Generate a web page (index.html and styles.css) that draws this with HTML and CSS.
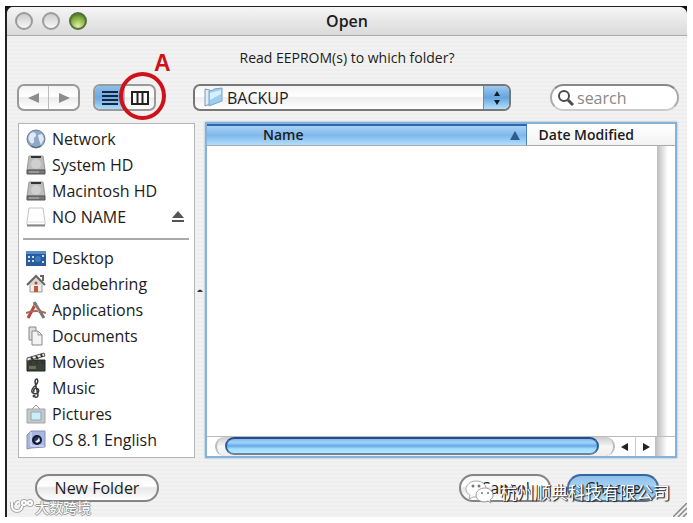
FILE: index.html
```html
<!DOCTYPE html>
<html lang="en">
<head>
<meta charset="utf-8">
<title>Open</title>
<link rel="stylesheet" href="styles.css">
</head>
<body>
<div class="frame">
<main class="window">
  <header class="titlebar">
    <div class="lights">
      <button class="light" aria-label="Close"></button>
      <button class="light" aria-label="Minimize"></button>
      <button class="light light-green" aria-label="Zoom"></button>
    </div>
    <h1>Open</h1>
  </header>
  <p class="prompt">Read EEPROM(s) to which folder?</p>

  <div class="toolbar">
    <div class="segments">
      <button aria-label="Back"><svg width="14" height="12" viewBox="0 0 14 12"><path d="M12 1v10L1 6z" fill="#8c8c8c"/></svg></button>
      <button aria-label="Forward"><svg width="14" height="12" viewBox="0 0 14 12"><path d="M2 1v10l11-5z" fill="#8c8c8c"/></svg></button>
    </div>
    <div class="segments views">
      <button class="active" aria-label="List view"><svg width="16" height="14" viewBox="0 0 16 14"><path d="M0 1h16M0 5h16M0 9h16M0 13h16" stroke="#17253b" stroke-width="2"/></svg></button>
      <button aria-label="Column view"><svg width="18" height="14" viewBox="0 0 18 14"><path d="M1 1h16v12H1zM6.5 1v12M11.5 1v12" fill="#fff" stroke="#222" stroke-width="2"/></svg></button>
      <div class="callout"><span>A</span></div>
    </div>
    <div class="popup">
      <svg class="folder" width="20" height="20" viewBox="0 0 20 20"><path d="M2 2l5 1v14l-5 2z" fill="#dceefa" stroke="#8796a5"/><path d="M6 4l4-1 1-1 8-1v13L6 19z" fill="#9fcdf0" stroke="#7aa6ca"/><path d="M7 6l11-3v4L7 13z" fill="#d9efff"/></svg>
      <select aria-label="Folder"><option>BACKUP</option></select>
      <span class="cap"><svg width="8" height="14" viewBox="0 0 8 14"><path d="M4 0l3 5H1zM4 14l3-5H1z" fill="#101c30"/></svg></span>
    </div>
    <label class="search">
      <svg width="17" height="17" viewBox="0 0 17 17"><circle cx="7" cy="7" r="5" fill="none" stroke="#4c4c4c" stroke-width="2"/><path d="M11 11l5 5" stroke="#4c4c4c" stroke-width="3"/></svg>
      <input type="text" placeholder="search" aria-label="search">
    </label>
  </div>

  <div class="browser">
    <nav class="sidebar">
      <ul>
        <li><svg class="icon" viewBox="0 0 20 20"><circle cx="10" cy="10" r="9" fill="#8fa8c6" stroke="#6b7d94"/><path d="M4 5c3-3 6-2 6 1s-3 2-2 5-2 5-4 2-2-5 0-8zM12 6l4-1 2 5-3 6-2-5z" fill="#dfeaf4"/><path d="M5 17q5 3 10 0" stroke="#53657d" fill="none"/></svg>Network</li>
        <li><svg class="icon" viewBox="0 0 20 20"><path d="M3 1h14l2 14H1z" fill="#bcbcbc" stroke="#999"/><path d="M1 15h18v4H1z" fill="#777" stroke="#555"/><path d="M5 2h10" stroke="#333" stroke-width="2"/><circle cx="10" cy="9" r="5" fill="#cfcfcf"/><path d="M3 17h10" stroke="#bbb"/></svg>System HD</li>
        <li><svg class="icon" viewBox="0 0 20 20"><path d="M3 1h14l2 14H1z" fill="#bcbcbc" stroke="#999"/><path d="M1 15h18v4H1z" fill="#777" stroke="#555"/><path d="M5 2h10" stroke="#333" stroke-width="2"/><circle cx="10" cy="9" r="5" fill="#cfcfcf"/><path d="M3 17h10" stroke="#bbb"/></svg>Macintosh HD</li>
        <li><svg class="icon" viewBox="0 0 20 20"><path d="M3 1h14l2 14v3H1v-3z" fill="#fff" stroke="#c4c4c4"/><path d="M1 18.500h18" stroke="#858585" stroke-width="2"/><path d="M2 15h16" stroke="#ddd"/></svg>NO NAME
          <button class="eject" aria-label="Eject NO NAME"><svg width="14" height="12" viewBox="0 0 14 12"><path d="M7 0l6 7H1zM1 9h12v2H1z" fill="#555"/></svg></button></li>
      </ul>
      <hr>
      <ul>
        <li><svg class="icon" viewBox="0 0 20 20"><path d="M0 3h20v15H0z" fill="#285c9f"/><path d="M0 3h20v3H0z" fill="#5b8dc8"/><path d="M2 8h2v2H2zM2 12h2v2H2zM6 8h2v2H6zM6 12h2v2H6zM16 7h2v2h-2zM16 13h2v2h-2z" fill="#c6e0f6"/><circle cx="12" cy="11" r="3" fill="#3f7ac0"/></svg>Desktop</li>
        <li><svg class="icon" viewBox="0 0 20 20"><path d="M4 10h12v8H4z" fill="#eee" stroke="#999"/><path d="M1 11l9-9 9 9" fill="#d8d8d8" stroke="#6d6259" stroke-width="2"/><path d="M14 2h3v5" fill="none" stroke="#666" stroke-width="2"/><path d="M8 12h4v6H8z" fill="#c75733"/><circle cx="10" cy="9" r="1.500" fill="#a34f36"/></svg>dadebehring</li>
        <li><svg class="icon" viewBox="0 0 20 20"><path d="M2 18L10 3" stroke="#ba473b" stroke-width="3"/><path d="M8 2l10 16" stroke="#777" stroke-width="3"/><path d="M0 13q10-4 20 0" stroke="#a5685d" stroke-width="2" fill="none"/><path d="M8 5l5 7" stroke="#e2a49a"/></svg>Applications</li>
        <li><svg class="icon" viewBox="0 0 20 20"><path d="M3 1h7v13H3z" fill="#ddd" stroke="#888"/><path d="M6 5h6l4 4v10H6z" fill="#f3f3f3" stroke="#8a8a8a"/><path d="M12 5v4h4" fill="none" stroke="#999"/></svg>Documents</li>
        <li><svg class="icon" viewBox="0 0 20 20"><path d="M1 8h18v11H1z" fill="#3b4136" stroke="#222"/><path d="M1 6L18 1l1 3L1 9z" fill="#e8e8e2" stroke="#555"/><path d="M5 5l2 3M10 4l2 3M15 2l1 3M3 9l3 3M9 9l3 3M15 9l3 3" stroke="#333" stroke-width="2"/><path d="M3 14h7v3H3z" fill="#687159"/></svg>Movies</li>
        <li><svg class="icon" viewBox="0 0 20 20"><path d="M9 19q3 1 3-2L9 4q0-3 2-3 2 2-1 6-5 4-4 7 2 3 6 1 2-4-2-5-3 1-2 4" fill="none" stroke="#3d3d3d" stroke-width="1.500"/><circle cx="8" cy="18" r="1.500" fill="#444"/></svg>Music</li>
        <li><svg class="icon" viewBox="0 0 20 20"><path d="M6 5l4-4 4 4" fill="none" stroke="#999"/><path d="M1 5h18v14H1z" fill="#c7c7c7" stroke="#a5a5a5"/><path d="M5 8h10v8H5z" fill="#cceefa" stroke="#8caab9"/></svg>Pictures</li>
        <li><svg class="icon" viewBox="0 0 20 20"><path d="M5 1h14v16L5 18l-4 1V5z" fill="#a9b7df" stroke="#8391bc"/><path d="M5 2v14h13" fill="none" stroke="#e5eaf8"/><circle cx="11" cy="10" r="4" fill="#29345a" stroke="#111a38" stroke-width="2"/><path d="M9 11q3 0 4-4l1 4-3 2z" fill="#eff2fc"/></svg>OS 8.1 English</li>
      </ul>
    </nav>
    <div class="divider"><svg width="8" height="5" viewBox="0 0 8 5"><path d="M1 4q3-5 6 0z" fill="#333"/></svg></div>
    <section class="files">
      <table>
        <thead><tr><th class="name">Name<svg width="10" height="9" viewBox="0 0 10 9"><path d="M5 0l5 9H0z" fill="#315b8d"/></svg></th><th class="date">Date Modified</th></tr></thead>
      </table>
      <div class="pane"><div class="track-v"></div></div>
      <div class="track-h">
        <div class="groove"><div class="thumb"></div></div>
        <button aria-label="Scroll left"><svg width="8" height="8" viewBox="0 0 8 8"><path d="M7 0v8L0 4z" fill="#222"/></svg></button>
        <button aria-label="Scroll right"><svg width="8" height="8" viewBox="0 0 8 8"><path d="M1 0v8l7-4z" fill="#222"/></svg></button>
        <div class="corner"></div>
      </div>
    </section>
  </div>

  <footer>
    <button class="pill new">New Folder</button>
    <button class="pill">Cancel</button>
    <button class="pill default">Choose</button>
  </footer>
  <svg class="grip" width="14" height="14" viewBox="0 0 14 14"><path d="M0 14L14 0M5 14l9-9M10 14l4-4" stroke="#888" stroke-width="1.500"/></svg>
  <div class="mark-left"><svg width="25" height="16" viewBox="0 0 25 16"><g fill="none" stroke="#aaa" stroke-width="4"><path d="M3 3v4a5 5 0 0 0 10 0M7 6q0-3 3-3"/><circle cx="15" cy="4" r="2"/><circle cx="21" cy="4" r="2"/></g><g fill="none" stroke="#fff" stroke-width="2"><path d="M3 3v4a5 5 0 0 0 10 0M7 6q0-3 3-3"/><circle cx="15" cy="4" r="2"/><circle cx="21" cy="4" r="2"/></g></svg><span lang="zh">大数跨境</span></div>
  <div class="mark-right"><svg width="29" height="24" viewBox="0 0 29 24"><path d="M11 1C5 1 1 5 1 9c0 3 2 5 4 6l-1 4 4-2h3c6 0 10-3 10-8s-4-8-10-8z" fill="#fff" stroke="#aaa"/><path d="M20 8c-5 0-9 3-9 7s4 7 9 7l3-1 3 2-1-3c2-1 3-3 3-5 0-4-4-7-8-7z" fill="#fff" stroke="#999"/><g fill="#777"><circle cx="8" cy="6" r="1.500"/><circle cx="14" cy="6" r="1.500"/><circle cx="17" cy="13" r="1"/><circle cx="23" cy="13" r="1"/></g></svg><span lang="zh">杭州顺典科技有限公司</span></div>
</main>
</div>
</body>
</html>
```

FILE: styles.css
```css
* { box-sizing: border-box; }
body {
  margin: 0;
  padding: 6px 6px 6px 5px;
  background: #fff;
  color: #1c1c1c;
  font: 500 16px/20px "Open Sans", "Noto Sans", sans-serif;
}
button { padding: 0; border: 0; background: none; font: inherit; color: inherit; }
svg { display: block; flex: none; }
ul { margin: 0; padding: 0; list-style: none; }

.frame { background: linear-gradient(#111 20px, transparent 20px); }
.window {
  position: relative;
  overflow: hidden;
  border-top: 1px solid #222;
  border-left: 2px solid #222;
  border-radius: 8px 8px 0 0;
  background: repeating-linear-gradient(#f2f2f2 0 2px, #eee 2px 4px);
}
.titlebar {
  display: grid;
  grid-template-columns: 1fr auto 1fr;
  align-items: center;
  height: 29px;
  padding: 0 8px;
  border-bottom: 1px solid #aaa;
  background: linear-gradient(#f5f5f5, #dadada);
}
.titlebar h1 { margin: 0; font-size: 16px; font-weight: 600; line-height: 20px; }
.lights { display: flex; gap: 9px; }
.light {
  width: 18px;
  height: 18px;
  border: 2px solid #9c9c9c;
  border-radius: 50%;
  background: linear-gradient(#ccc, #f8f8f8);
}
.light-green { border-color: #52703a; background: radial-gradient(circle at 50% 85%, #e4eda9, #83b540 55%, #41651f); }
.prompt { margin: 12px 0 16px; text-align: center; font-size: 14px; line-height: 20px; }

.toolbar { display: flex; height: 27px; padding: 0 8px 0 10px; }
.segments {
  position: relative;
  display: flex;
  width: 63px;
  border: 2px solid #999;
  border-radius: 7px;
  background: linear-gradient(#f4f4f4, #fff 45%, #ececec 50%, #fff);
}
.segments button { display: flex; flex: 1; align-items: center; justify-content: center; }
.segments button + button { border-left: 1px solid #bbb; }
.views { margin-left: 13px; }
.segments .active { border-radius: 5px 0 0 5px; background: linear-gradient(#8bbde9, #6baae3 50%, #a9dafa); }
.callout {
  position: absolute;
  top: -14px;
  left: 24px;
  width: 47px;
  height: 48px;
  border: 4px solid #cf1118;
  border-radius: 50%;
}
.callout span {
  position: absolute;
  top: -26px;
  left: 31px;
  color: #cf1118;
  font: 700 23px/26px "Liberation Sans", sans-serif;
}
.popup {
  position: relative;
  display: flex;
  flex: 1;
  margin: 0 39px 0 37px;
  border: 2px solid #777;
  border-radius: 7px;
  background: linear-gradient(#f4f4f4, #fff 45%, #eee 50%, #fff);
  overflow: hidden;
}
.popup select {
  flex: 1;
  appearance: none;
  padding: 0 0 0 32px;
  border: 0;
  background: none;
  color: inherit;
  font: 500 16px/20px "Open Sans", "Noto Sans", sans-serif;
}
.folder { position: absolute; top: 1px; left: 8px; }
.cap {
  display: flex;
  align-items: center;
  justify-content: center;
  width: 26px;
  background: linear-gradient(#9bc8f0, #66a5de 50%, #b2e0fb);
  border-left: 1px solid #5c8fc4;
}
.search {
  display: flex;
  align-items: center;
  gap: 3px;
  width: 129px;
  padding: 0 10px 0 5px;
  border: 2px solid #aaa;
  border-top-color: #888;
  border-bottom-color: #ccc;
  border-radius: 14px;
  background: #fff;
}
.search input { width: 100%; min-width: 0; padding: 0; border: 0; outline: 0; background: none; font: 500 16px/20px "Open Sans", "Noto Sans", sans-serif; }
.search input::placeholder { color: #888; opacity: 1; }

.browser { display: grid; grid-template-columns: 177px 10px 1fr; padding: 11px 10px 0 11px; }
.sidebar { margin-top: 1px; padding: 2px 5px 4px 7px; border: 1px solid #b5b5b5; background: #fff; }
.sidebar li { display: flex; align-items: center; gap: 6px; height: 26px; }
.icon { width: 20px; height: 20px; }
.eject { margin-left: auto; margin-right: 4px; }
.sidebar hr { margin: 8px 0 5px -3px; border: 0; border-top: 2px solid #aaa; }
.divider { display: flex; align-items: center; justify-content: center; }

.files {
  display: flex;
  flex-direction: column;
  border: 2px solid #86b1d8;
  background: #fff;
  box-shadow: 0 0 2px #86b1d8;
}
table { width: 100%; border-collapse: collapse; }
th { height: 20px; padding: 0; border-bottom: 1px solid #aaa; font-size: 14px; font-weight: 600; line-height: 18px; text-align: left; }
.name {
  position: relative;
  padding-left: 56px;
  border-top: 2px solid #2d69b0;
  background: linear-gradient(#a8d2f5, #7fb9ec 50%, #b4defa);
}
.name svg { position: absolute; top: 5px; right: 6px; }
.date { width: 149px; padding-left: 12px; border-left: 1px solid #4f83bd; background: linear-gradient(#fff, #f2f2f2); }
.pane { display: flex; flex: 1; justify-content: flex-end; }
.track-v { width: 18px; background: linear-gradient(90deg, #bdbdbd, #e8e8e8 40%, #fff 60%); }
.track-h { display: flex; height: 20px; border-top: 1px solid #bbb; background: #fff; }
.groove {
  flex: 1;
  margin-left: 8px;
  padding: 0 14px 0 8px;
  border: 2px solid #bbb;
  border-width: 0 2px;
  border-radius: 10px;
  background: linear-gradient(#ccc, #f6f6f6 50%, #eee);
}
.thumb {
  height: 18px;
  border: 2px solid #295fa8;
  border-top-color: #234c8e;
  border-bottom-color: #71839a;
  border-radius: 9px;
  background: linear-gradient(#83b8ed, #a0d3fa 25%, #66a9e7 50%, #a3dcff 70%, #afe8ff);
}
.track-h button { display: flex; align-items: center; justify-content: center; width: 20px; }
.track-h button + button { border-left: 1px solid #ccc; }
.corner { width: 20px; background: linear-gradient(90deg, #bdbdbd, #e8e8e8 40%, #fff 60%); }

footer { display: flex; gap: 16px; padding: 16px 28px 15px; }
.pill {
  width: 92px;
  height: 28px;
  border: 2px solid #858585;
  border-radius: 14px;
  background: linear-gradient(#f5f5f5, #fff 40%, #e7e7e7 50%, #fff);
}
.new { width: 124px; margin-right: auto; }
.default { border-color: #37659e #4b6e96 #5b7188; background: linear-gradient(#8ebfeb, #a5d0f4 40%, #73b0e6 50%, #b7e4fc); }
.grip { position: absolute; right: 0; bottom: 0; }
.mark-left, .mark-right { position: absolute; display: flex; align-items: center; color: #fff; white-space: nowrap; }
.mark-left {
  left: 2px;
  bottom: 0;
  gap: 1px;
  font: 14px/20px "Noto Sans CJK SC", sans-serif;
  text-shadow: 1px 0 #999, -1px 0 #999, 0 1px #999, 0 -1px #999;
}
.mark-right {
  right: 17px;
  bottom: 12px;
  gap: 6px;
  font: 17px/26px "Noto Sans CJK SC", sans-serif;
  text-shadow: 1px 1px 1px #222, 1px 0 #444;
}
```
